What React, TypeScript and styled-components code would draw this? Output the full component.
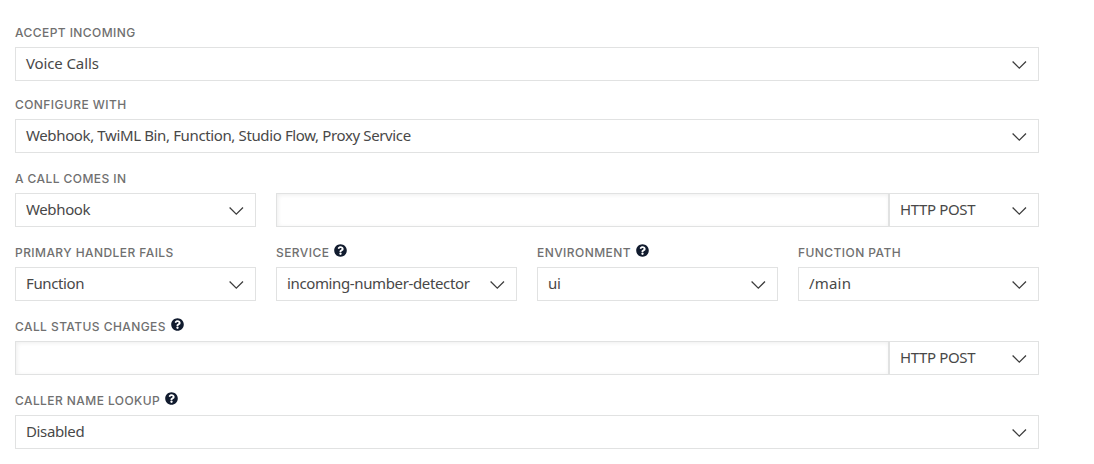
import React from "react";
import styled, { createGlobalStyle } from "styled-components";
import { FaQuestionCircle } from "react-icons/fa";

const GlobalStyle = createGlobalStyle`
  * { box-sizing: border-box; }
  body { margin: 0; background: #fff; }
`;

const Form = styled.form`
  width: 1039px;
  padding: 25px 0 0 15px;
`;

const Row = styled.div<{ $gap?: number }>`
  display: grid;
  grid-template-columns: repeat(4, 241px);
  column-gap: 20px;
  margin-bottom: ${(p) => p.$gap ?? 18}px;
`;

const Field = styled.div<{ $span?: number }>`
  grid-column: span ${(p) => p.$span ?? 1};
  min-width: 0;
`;

const Label = styled.label`
  display: flex;
  align-items: flex-start;
  height: 22px;
  font: 500 12px/16px Inter, sans-serif;
  letter-spacing: 0.43px;
  color: #707070;
  text-transform: uppercase;
  white-space: nowrap;
`;

const HelpIcon = styled(FaQuestionCircle)`
  width: 13px;
  height: 13px;
  margin: -1px 0 0 5px;
  color: #111b2e;
`;

const Select = styled.div<{ $joined?: boolean }>`
  display: flex;
  align-items: center;
  justify-content: space-between;
  flex: none;
  width: ${(p) => (p.$joined ? "150px" : "100%")};
  height: 34px;
  padding: 0 11px 2px 10px;
  border: 1px solid #e1e2e2;
  background: #fff;
`;

const Value = styled.span<{ $spacing: number }>`
  font: 400 15px/30px "Noto Sans", sans-serif;
  letter-spacing: ${(p) => p.$spacing}px;
  color: #484848;
  white-space: nowrap;
`;

const Chevron = styled.svg`
  flex: none;
  width: 15px;
  height: 10px;
  margin-top: 4px;
  fill: none;
  stroke: #3c3c3c;
  stroke-width: 1.25;
`;

const InputGroup = styled.div`
  display: flex;
`;

const Input = styled.input`
  flex: 1;
  min-width: 0;
  height: 34px;
  padding: 0 10px;
  border: 1px solid #e1e2e2;
  border-radius: 0;
  outline: none;
  box-shadow: inset 1px 1px 4px rgba(0, 0, 0, 0.07);
`;

function Picker({ value, spacing = -0.37, joined }: { value: string; spacing?: number; joined?: boolean }) {
  return (
    <Select $joined={joined}>
      <Value $spacing={spacing}>{value}</Value>
      <Chevron viewBox="0 0 15 10">
        <path d="M0.6 1.5 L7.3 8.2 L14 1.5" />
      </Chevron>
    </Select>
  );
}

export default function App() {
  return (
    <>
      <GlobalStyle />
      <Form>
        <Row $gap={16}>
          <Field $span={4}>
            <Label>Accept incoming</Label>
            <Picker value="Voice Calls" spacing={-0.12} />
          </Field>
        </Row>
        <Row>
          <Field $span={4}>
            <Label>Configure with</Label>
            <Picker value="Webhook, TwiML Bin, Function, Studio Flow, Proxy Service" />
          </Field>
        </Row>
        <Row>
          <Field>
            <Label>A call comes in</Label>
            <Picker value="Webhook" />
          </Field>
          <Field $span={3}>
            <Label />
            <InputGroup>
              <Input />
              <Picker value="HTTP POST" joined />
            </InputGroup>
          </Field>
        </Row>
        <Row>
          <Field>
            <Label>Primary handler fails</Label>
            <Picker value="Function" />
          </Field>
          <Field>
            <Label>Service <HelpIcon /></Label>
            <Picker value="incoming-number-detector" />
          </Field>
          <Field>
            <Label>Environment <HelpIcon /></Label>
            <Picker value="ui" />
          </Field>
          <Field>
            <Label>Function path</Label>
            <Picker value="/main" spacing={0.2} />
          </Field>
        </Row>
        <Row>
          <Field $span={4}>
            <Label>Call status changes <HelpIcon /></Label>
            <InputGroup>
              <Input />
              <Picker value="HTTP POST" joined />
            </InputGroup>
          </Field>
        </Row>
        <Row $gap={0}>
          <Field $span={4}>
            <Label>Caller name lookup <HelpIcon /></Label>
            <Picker value="Disabled" />
          </Field>
        </Row>
      </Form>
    </>
  );
}
